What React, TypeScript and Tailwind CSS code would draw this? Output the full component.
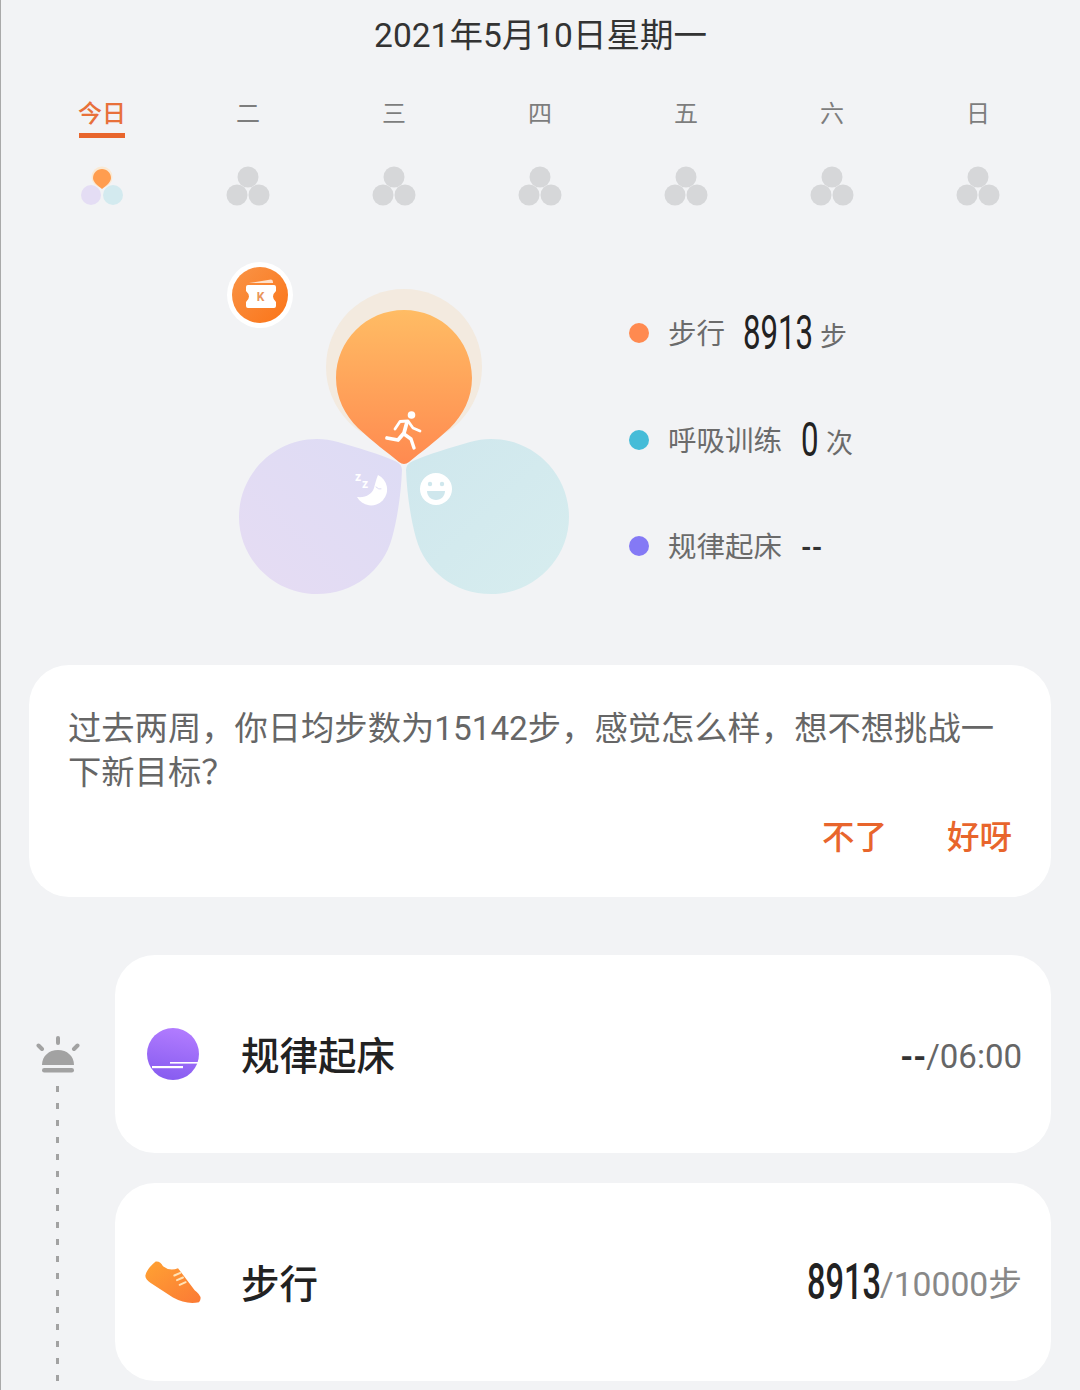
import React from "react";

const days = ["今日", "二", "三", "四", "五", "六", "日"];

const Clover = ({ active }: { active: boolean }) => (
  <svg width="44" height="42" viewBox="0 0 44 42">
    {active ? (
      <>
        <circle cx="11" cy="29" r="10" fill="#e4ddf4" />
        <circle cx="33" cy="29" r="10" fill="#d3eaef" />
        <circle cx="22" cy="11" r="10.5" fill="#fae9d4" />
        <path d="M22 3C27 3 31 7 31 12C31 16 26 20 22 23C18 20 13 16 13 12C13 7 17 3 22 3Z" fill="#ff9d4f" />
      </>
    ) : (
      <>
        <circle cx="22" cy="11" r="10.5" fill="#d6d7d9" />
        <circle cx="11" cy="29" r="10.5" fill="#d6d7d9" />
        <circle cx="33" cy="29" r="10.5" fill="#d6d7d9" />
      </>
    )}
  </svg>
);

const Chart = () => (
  <svg width="360" height="345" viewBox="220 255 360 345" className="shrink-0">
    <defs>
      <linearGradient id="orange" x1="0" y1="0" x2="0" y2="1">
        <stop offset="0" stopColor="#ffbc64" />
        <stop offset="1" stopColor="#ff8a50" />
      </linearGradient>
      <linearGradient id="purple" x1="0" y1="1" x2="1" y2="0">
        <stop offset="0" stopColor="#e6dcf3" />
        <stop offset="1" stopColor="#dddcf5" />
      </linearGradient>
      <linearGradient id="teal" x1="0" y1="0" x2="1" y2="1">
        <stop offset="0" stopColor="#cfe7ed" />
        <stop offset="1" stopColor="#d7edef" />
      </linearGradient>
      <linearGradient id="badge" x1="0" y1="0" x2="1" y2="1">
        <stop offset="0" stopColor="#f99447" />
        <stop offset="1" stopColor="#fb7418" />
      </linearGradient>
    </defs>

    <circle cx="404" cy="367" r="78" fill="#f3eadf" />
    <path
      d="M404 310C441.6 310 472 340.4 472 378C472 398 463 415 450 428C435 442 420 453 409 462Q404 466 399 462C388 453 373 442 358 428C345 415 336 398 336 378C336 340.4 366.4 310 404 310Z"
      fill="url(#orange)"
    />
    <path
      d="M317 439C324 439 331 440 338 442C358 448 380 454 395 461Q402 464 402 470C401 495 397 520 392 538C383 571 353 594 317 594C274 594 239 559 239 517C239 474 274 439 317 439Z"
      fill="url(#purple)"
    />
    <path
      d="M491 439C484 439 477 440 470 442C450 448 428 454 413 461Q406 464 406 470C407 495 411 520 416 538C425 571 455 594 491 594C534 594 569 559 569 517C569 474 534 439 491 439Z"
      fill="url(#teal)"
    />

    {/* runner */}
    <circle cx="411.5" cy="415" r="3.8" fill="#fff" />
    <g fill="none" stroke="#fff" strokeLinecap="round" strokeLinejoin="round">
      <path d="M395 429L400 421.5L408 421L413 428L420 431" strokeWidth="2.8" />
      <path d="M407 422L404 433L398 440L387 438" strokeWidth="3.8" />
      <path d="M404 434L411 439L414 448" strokeWidth="3.4" />
    </g>

    {/* moon */}
    <path d="M378 475A16 16 0 1 1 357 497C366 498 372 494 374 488C375 484 376 480 378 475Z" fill="#fff" />
    <path d="M376 487Q379 490 381 489" fill="none" stroke="#dddcf5" strokeWidth="1" strokeLinecap="round" />
    <text x="355" y="481" fontSize="12" fontWeight="700" fill="#fff" fontFamily="Roboto, sans-serif">z</text>
    <text x="362" y="488" fontSize="12" fontWeight="700" fill="#fff" fontFamily="Roboto, sans-serif">z</text>

    {/* smile */}
    <circle cx="436" cy="489" r="16" fill="#fff" />
    <circle cx="430" cy="484" r="2.2" fill="#cfe7ed" />
    <circle cx="442" cy="484" r="2.2" fill="#cfe7ed" />
    <path d="M427 491H445C445 496 441 500 436 500C431 500 427 496 427 491Z" fill="#cfe7ed" />

    {/* K badge */}
    <circle cx="260" cy="295" r="33" fill="#fff" />
    <circle cx="260" cy="295" r="28" fill="url(#badge)" />
    <path d="M249 283L271 279.5Q273 279.5 273 282L273 283Z" fill="#fff" opacity="0.75" />
    <path
      d="M248 285H274Q276 285 276 287V291Q270 296.5 276 302V306Q276 308 274 308H248Q246 308 246 306V302Q252 296.5 246 291V287Q246 285 248 285Z"
      fill="#fff"
    />
    <text x="260.5" y="301" textAnchor="middle" fontSize="12" fontWeight="700" fill="#e9955a" fontFamily="Roboto, sans-serif">K</text>
  </svg>
);

const SunIcon = () => (
  <svg width="44" height="40" viewBox="36 1035 44 40" className="shrink-0">
    <g fill="#a2a2a2">
      <path d="M42 1065C42 1056 49 1050 58 1050C67 1050 74 1056 74 1065Z" />
      <rect x="42" y="1068" width="32" height="4.5" rx="2.2" />
    </g>
    <g stroke="#a2a2a2" strokeWidth="4" strokeLinecap="round">
      <path d="M58 1038V1043" />
      <path d="M38.5 1045.5L42 1049" />
      <path d="M77.5 1045.5L74 1049" />
    </g>
  </svg>
);

const WakeIcon = () => (
  <svg width="54" height="54" viewBox="0 0 54 54" className="shrink-0">
    <defs>
      <linearGradient id="wake" x1="0.6" y1="0" x2="0.4" y2="1">
        <stop offset="0" stopColor="#b27cff" />
        <stop offset="1" stopColor="#875cf0" />
      </linearGradient>
    </defs>
    <circle cx="26" cy="27" r="26" fill="url(#wake)" />
    <rect x="23" y="35" width="29" height="1.6" fill="#fff" />
    <rect x="5" y="39" width="31" height="2.2" fill="#fff" />
  </svg>
);

const ShoeIcon = () => (
  <svg width="60" height="47" viewBox="340 55 180 140" className="shrink-0">
    <defs>
      <linearGradient id="shoe" x1="0" y1="0" x2="1" y2="1">
        <stop offset="0" stopColor="#ffa233" />
        <stop offset="1" stopColor="#fb7a35" />
      </linearGradient>
    </defs>
    <path
      d="M347 105Q350 85 378 62Q392 60 400 76Q420 92 445 82L495 148Q522 168 508 184Q470 192 430 170L362 126Q347 116 347 105Z"
      fill="url(#shoe)"
    />
    <g stroke="#ffe2b5" strokeWidth="6" strokeLinecap="round">
      <path d="M434 104L452 96" />
      <path d="M442 118L460 110" />
      <path d="M450 132L468 124" />
    </g>
  </svg>
);

const App = () => {
  return (
    <div className="w-[1080px] h-[1390px] overflow-hidden border-l border-[#a9a9a9] bg-[#f2f3f5] font-['Roboto','Noto_Sans_CJK_SC',sans-serif]">
      <div className="h-[70px] pt-[2px] flex items-center justify-center text-[33.5px] text-[#333333]">
        2021年5月10日星期一
      </div>

      <div className="grid grid-cols-7 ml-[28px] mr-[29px] mt-[20px]">
        {days.map((day, index) => (
          <div className="flex flex-col items-center" key={day}>
            <div className={`h-[43px] text-[24px] leading-[48px] ${index === 0 ? "text-[#e8703a] font-medium" : "text-[#7d7d7d]"}`}>
              {day}
            </div>
            <div className={`h-[5px] w-[46px] ${index === 0 ? "bg-[#e8652c]" : ""}`}></div>
            <div className="mt-[28px]">
              <Clover active={index === 0} />
            </div>
          </div>
        ))}
      </div>

      <div className="flex mt-[47px] ml-[219px]">
        <Chart />
        <div className="flex flex-col gap-[56.5px] pt-[53px] ml-[49px] text-[28.5px] text-[#6b6b6b]">
          <div className="h-[50px] flex items-center">
            <span className="w-[20px] h-[20px] rounded-full bg-[#ff8a50]"></span>
            <span className="ml-[19px] mt-[5px] w-[75px]">步行</span>
            <span className="inline-block w-[77px] origin-left scale-x-[0.65] whitespace-nowrap text-[48px] leading-[50px] text-[#222222]">8913</span>
            <span className="mt-[9px] text-[27px]">步</span>
          </div>
          <div className="h-[50px] flex items-center">
            <span className="w-[20px] h-[20px] rounded-full bg-[#45bcd8]"></span>
            <span className="ml-[19px] mt-[5px] w-[133px]">呼吸训练</span>
            <span className="inline-block w-[25px] origin-left scale-x-[0.65] whitespace-nowrap text-[48px] leading-[50px] text-[#222222]">0</span>
            <span className="mt-[9px] text-[27px]">次</span>
          </div>
          <div className="h-[50px] flex items-center">
            <span className="w-[20px] h-[20px] rounded-full bg-[#8479f5]"></span>
            <span className="ml-[19px] mt-[5px] w-[133px]">规律起床</span>
            <span className="mt-[5px] font-bold text-[27px] text-[#333333]">--</span>
          </div>
        </div>
      </div>

      <div className="mt-[65px] ml-[28px] mr-[29px] h-[232px] rounded-[40px] bg-white px-[39px] pt-[42px]">
        <p className="text-[33.3px] leading-[44px] text-[#666666]">
          过去两周，你日均步数为15142步，感觉怎么样，想不想挑战一下新目标？
        </p>
        <div className="mt-[21px] flex justify-end gap-[60px] text-[32.5px] leading-[44px] font-medium text-[#e8652c]">
          <span>不了</span>
          <span>好呀</span>
        </div>
      </div>

      <div className="flex mt-[58px]">
        <div className="w-[114px] shrink-0 flex flex-col items-center pt-[80px] pr-[1px]">
          <SunIcon />
          <div className="mt-[11px] w-[3px] flex-1 bg-[repeating-linear-gradient(to_bottom,#a2a2a2_0,#a2a2a2_6px,transparent_6px,transparent_17px)]"></div>
        </div>
        <div className="flex-1 mr-[29px] flex flex-col gap-[30px]">
          <div className="h-[198px] rounded-[40px] bg-white flex items-center pl-[32px] pr-[29px]">
            <WakeIcon />
            <span className="ml-[40px] mt-[6px] text-[38.5px] font-medium text-[#222222]">规律起床</span>
            <span className="ml-auto mt-[6px] text-[33px] text-[#666666]">
              <span className="font-bold text-[#333333]">--</span>/06:00
            </span>
          </div>
          <div className="h-[198px] rounded-[40px] bg-white flex items-center pl-[28px] pr-[29px]">
            <ShoeIcon />
            <span className="ml-[38px] mt-[6px] text-[38.5px] font-medium text-[#222222]">步行</span>
            <span className="ml-auto flex items-center">
              <span className="inline-block w-[73px] origin-left scale-x-[0.65] whitespace-nowrap text-[50px] leading-[50px] font-medium text-[#222222]">8913</span>
              <span className="text-[33.7px] text-[#888888] mt-[7px]">/10000步</span>
            </span>
          </div>
        </div>
      </div>
    </div>
  );
};

export default App;
